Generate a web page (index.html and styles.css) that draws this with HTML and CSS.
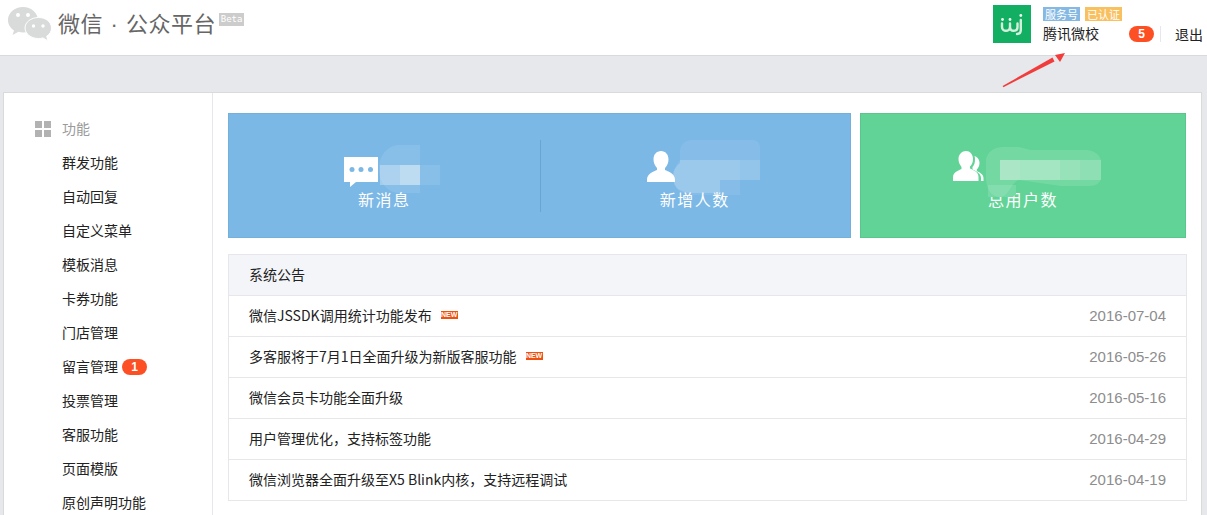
FILE: index.html
```html
<!DOCTYPE html>
<html lang="zh-CN">
<head>
<meta charset="utf-8">
<title>微信公众平台</title>
<link rel="stylesheet" href="styles.css">
</head>
<body>
<header class="topbar">
  <div class="brand">
    <svg class="brand-logo" width="46" height="36" viewBox="6 7 46 36">
      <path class="logo-back" d="M23 7C14.700 7 8 12.800 8 20c0 4.500 2.500 8 6 10.500L12.500 35l6-3.200c1.500.5 3 .7 4.500.7C31.300 32.500 38 26.700 38 20S31.300 7 23 7z"/>
      <circle class="logo-eye" cx="18" cy="15" r="2"/><circle class="logo-eye" cx="28" cy="15" r="2"/>
      <path class="logo-front" d="M38.500 17.500C31 17.500 25 22.200 25 28s6 10.500 13.500 10.500c1.500 0 3-.2 4.400-.6l5.100 3-1.300-4.600c3-2 4.800-5 4.800-8.300C51.500 22.200 46 17.500 38.500 17.500z"/>
      <circle class="logo-eye" cx="33.500" cy="26" r="1.700"/><circle class="logo-eye" cx="43" cy="26" r="1.700"/>
    </svg>
    <h1 class="brand-title">微信 · 公众平台</h1>
    <span class="beta">Beta</span>
  </div>
  <div class="account">
    <div class="avatar">
      <svg width="38" height="38" viewBox="0 0 38 38">
        <path class="avatar-stroke" d="M9 18.500v3.500c0 5 8 5 8 0v-3.500M17 22c0 5 7.500 5 7.500 0v-3.500M27.800 15v10c0 2.500-1.500 4-3.800 4"/>
        <circle class="avatar-dot" cx="9.500" cy="14.500" r="1.400"/><circle class="avatar-dot" cx="17" cy="14.500" r="1.400"/><circle class="avatar-dot" cx="27.800" cy="10.500" r="1.400"/>
      </svg>
    </div>
    <div class="account-info">
      <div class="account-tags"><span class="tag tag-blue">服务号</span><span class="tag tag-yellow">已认证</span></div>
      <div class="account-name">腾讯微校</div>
    </div>
    <span class="badge badge-top">5</span>
    <span class="logout">退出</span>
  </div>
</header>

<div class="page">
  <div class="shell">
    <nav class="sidebar">
      <div class="nav-head">
        <span class="nav-icon"><i></i><i></i><i></i><i></i></span>
        <span>功能</span>
      </div>
      <a class="nav-item">群发功能</a>
      <a class="nav-item">自动回复</a>
      <a class="nav-item">自定义菜单</a>
      <a class="nav-item">模板消息</a>
      <a class="nav-item">卡券功能</a>
      <a class="nav-item">门店管理</a>
      <a class="nav-item">留言管理<span class="badge badge-nav">1</span></a>
      <a class="nav-item">投票管理</a>
      <a class="nav-item">客服功能</a>
      <a class="nav-item">页面模版</a>
      <a class="nav-item">原创声明功能</a>
    </nav>
    <main class="content">
      <section class="stats">
        <div class="card card-blue">
          <div class="stat">
            <div class="stat-figure stat-figure-msg">
              <svg width="34" height="30" viewBox="0 0 34 30">
                <path class="icon-fill" d="M0 0h34v25H12l-6 5v-5H0z"/>
                <circle class="icon-dot" cx="8" cy="12.500" r="2.500"/><circle class="icon-dot" cx="17" cy="12.500" r="2.500"/><circle class="icon-dot" cx="26.500" cy="12.500" r="2.500"/>
              </svg>
            </div>
            <div class="stat-label">新消息</div>
            <svg class="blur blur-a" width="64" height="50" viewBox="0 0 64 50">
              <path fill="#fff" opacity=".1" d="M1 24C1 10 10 0 22 0h20v20h20v20H42v8H22C10 48 1 38 1 24z"/>
              <rect x="2" y="20" width="20" height="20" fill="#fff" opacity=".3"/>
              <rect x="22" y="20" width="20" height="20" fill="#fff" opacity=".45"/>
            </svg>
          </div>
          <div class="stat stat-split">
            <div class="stat-figure stat-figure-user">
              <svg width="28" height="32" viewBox="0 -1 28 32">
                <path class="icon-fill" d="M14 0c4.500 0 7.500 3.500 7.500 8.500 0 3.500-1.500 6.500-3.500 8.500v2c3 1.500 10 3.500 10 9.500V31H0v-2.500c0-6 7-8 10-9.500v-2c-2-2-3.500-5-3.500-8.500C6.500 3.500 9.500 0 14 0z"/>
              </svg>
            </div>
            <div class="stat-label">新增人数</div>
            <svg class="blur blur-b" width="88" height="56" viewBox="0 0 88 56">
              <path fill="#fff" opacity=".08" d="M8 20v-8C8 4 14 0 20 0h60c5 0 8 3 8 8v32H68v15H20C9 55 1 48 1 37c0-7 3-12 7-17z"/>
              <rect x="8" y="20" width="60" height="20" fill="#fff" opacity=".18"/>
              <rect x="68" y="20" width="20" height="20" fill="#fff" opacity=".12"/>
              <path fill="#fff" opacity=".18" d="M8 23C3 27 1 32 1 37c0 11 8 16 19 16h28V40H8z"/>
            </svg>
          </div>
        </div>
        <div class="card card-green">
          <div class="stat">
            <div class="stat-figure stat-figure-group">
              <svg width="34" height="32" viewBox="0 0 34 32">
                <path class="icon-fill" d="M13 1c4 0 7 3.500 7 8 0 3-1 5.500-3 7.500v2c3 1.500 8.500 3 8.500 8.500V31H0v-3.500c0-5.500 5.500-7 8.500-8.500v-2C6.500 14.500 5.500 12 5.500 9c0-4.500 3.500-8 7.500-8z"/>
                <path class="icon-fill" d="M21 6c3 .5 5.500 3 5.500 7 0 3-1.200 5-2.700 6.500V21c2 1 6.700 3 6.700 7v3h-2.500v-3c0-4-4-6.500-8.500-8.500V17c2-2 2.500-5 2.500-8 0-1-.2-2-.5-3z"/>
              </svg>
            </div>
            <div class="stat-label">总用户数</div>
            <svg class="blur blur-c" width="116" height="52" viewBox="0 0 116 52">
              <path fill="#74d9a4" d="M3 38h28v9l-3 3H3z"/>
              <path fill="#fff" opacity=".12" d="M1 12C3 4 10 0 18 0h16l12 3h55c8 0 15 5 15 12v15c0 6-5 9-12 9H76l-42-6C26 35 24 50 15 50 5 50 1 40 1 30z"/>
              <rect x="15" y="13" width="20" height="20" fill="#fff" opacity=".4"/>
              <rect x="35" y="13" width="40" height="20" fill="#fff" opacity=".35"/>
              <rect x="75" y="13" width="20" height="20" fill="#fff" opacity=".25"/>
              <rect x="95" y="13" width="21" height="20" fill="#fff" opacity=".2"/>
            </svg>
          </div>
        </div>
      </section>
      <section class="notice">
        <div class="notice-head">系统公告</div>
        <div class="notice-row"><span class="notice-text">微信JSSDK调用统计功能发布<span class="new">NEW</span></span><span class="notice-date">2016-07-04</span></div>
        <div class="notice-row"><span class="notice-text">多客服将于7月1日全面升级为新版客服功能<span class="new">NEW</span></span><span class="notice-date">2016-05-26</span></div>
        <div class="notice-row"><span class="notice-text">微信会员卡功能全面升级</span><span class="notice-date">2016-05-16</span></div>
        <div class="notice-row"><span class="notice-text">用户管理优化，支持标签功能</span><span class="notice-date">2016-04-29</span></div>
        <div class="notice-row"><span class="notice-text">微信浏览器全面升级至X5 Blink内核，支持远程调试</span><span class="notice-date">2016-04-19</span></div>
      </section>
    </main>
  </div>
</div>

<svg class="arrow" width="70" height="44" viewBox="0 0 70 44">
  <path d="M2.600 39 L52.500 10.500 L54.500 14.500 L3.400 40.200z" fill="#f23c3c"/>
  <path d="M65 6 L55 8 L60 15z" fill="#f23c3c"/>
</svg>
</body>
</html>
```

FILE: styles.css
```css
* { box-sizing: border-box; }

html, body {
  margin: 0;
  height: 515px;
  overflow: hidden;
}

body {
  position: relative;
  background: #e7e8eb;
  color: #222;
  font-family: "Noto Sans CJK SC", "Liberation Sans", sans-serif;
  font-size: 14px;
}

.topbar {
  height: 56px;
  background: #fff;
  border-bottom: 1px solid #d9dadc;
  display: flex;
  justify-content: space-between;
}

.brand {
  display: flex;
  align-items: flex-start;
  padding: 7px 0 0 6px;
}

.brand-logo { flex: none; }
.logo-back { fill: #d8dbd9; }
.logo-front { fill: #d8dbd9; stroke: #fff; stroke-width: 1; }
.logo-eye { fill: #fff; }

.brand-title {
  margin: 0 0 0 6px;
  font-family: "Liberation Sans", "Noto Sans CJK SC", sans-serif;
  font-size: 22px;
  font-weight: 400;
  line-height: 36px;
  letter-spacing: .5px;
  word-spacing: 1px;
  color: #666;
  white-space: nowrap;
}

.beta {
  margin: 6px 0 0 3px;
  width: 25px;
  height: 13px;
  background: #ccc;
  color: #fff;
  font-family: "DejaVu Sans Mono", monospace;
  font-size: 9px;
  line-height: 13px;
  text-align: center;
}

.account {
  display: flex;
  align-items: flex-start;
  padding: 5px 4px 0 0;
}

.avatar {
  width: 38px;
  height: 38px;
  background: #12ae62;
}

.avatar svg { display: block; }

.avatar-stroke {
  fill: none;
  stroke: #d4f0dc;
  stroke-width: 2.400;
  stroke-linecap: round;
}

.avatar-dot { fill: #f2fbf4; }

.account-info { margin-left: 12px; width: 86px; }

.account-tags {
  display: flex;
  gap: 5px;
  margin-top: 2px;
}

.tag {
  height: 14px;
  padding: 0 2px;
  color: #fff;
  font-size: 11px;
  line-height: 14px;
  white-space: nowrap;
}

.tag-blue { background: #85b9e3; }
.tag-yellow { background: #f9c05f; }

.account-name {
  margin-top: 2px;
  font-size: 14px;
  line-height: 20px;
  color: #222;
}

.badge {
  background: #fd4f24;
  color: #fff;
  border-radius: 8px;
  width: 25px;
  height: 16px;
  font-size: 12px;
  font-weight: 700;
  line-height: 16px;
  text-align: center;
  font-family: "Liberation Sans", sans-serif;
}

.badge-top { margin-top: 21px; }

.logout {
  margin: 21px 0 0 6px;
  padding-left: 14px;
  height: 16px;
  border-left: 1px solid #e7e7eb;
  font-size: 14px;
  line-height: 16px;
}

.page {
  padding: 36px 5px 0 3px;
}

.shell {
  display: flex;
  background: #fff;
  border: 1px solid #d9dadc;
  border-bottom: 0;
  height: 423px;
  overflow: hidden;
}

.sidebar {
  width: 209px;
  flex: none;
  border-right: 1px solid #e7e7eb;
  padding-top: 19px;
}

.nav-head, .nav-item {
  display: flex;
  align-items: center;
  height: 34px;
  padding-bottom: 2px;
  white-space: nowrap;
}

.nav-item { padding-left: 58px; color: #222; }

.nav-head {
  padding-left: 31px;
  color: #9a9a9a;
  gap: 11px;
}

.nav-icon {
  display: grid;
  grid-template-columns: 7px 7px;
  grid-template-rows: 7px 7px;
  gap: 2px;
  width: 16px;
  height: 16px;
  margin-top: 2px;
}

.nav-icon i { background: #b2b2b2; }

.badge-nav { margin-left: 4px; margin-top: 2px; }

.content {
  flex: 1;
  padding: 20px 15px 0 15px;
  min-width: 0;
}

.stats {
  display: flex;
  gap: 9px;
}

.card {
  height: 125px;
  display: flex;
  border: 1px solid;
}

.card-blue {
  width: 623px;
  background: #7bb8e6;
  border-color: #73b0dc;
}

.card-green {
  width: 326px;
  background: #61d396;
  border-color: #59c78c;
}

.stat {
  position: relative;
  flex: 1;
  display: flex;
  flex-direction: column;
  align-items: center;
}

.stat-split::before {
  content: "";
  position: absolute;
  left: 0;
  top: 26px;
  height: 72px;
  border-left: 1px solid #6aa4cf;
}

.stat-figure {
  display: flex;
  height: 44px;
  align-items: flex-end;
  width: 100%;
}

.stat-figure svg { display: block; flex: none; }
.stat-figure-msg { padding-left: 115px; height: 73px; }
.stat-figure-user { padding-left: 107px; height: 68px; }
.stat-figure-group { padding-left: 92px; height: 68px; }

.icon-fill { fill: #fff; }
.icon-dot { fill: #7bb8e6; }

.stat-label {
  height: 24px;
  color: #fff;
  font-size: 16px;
  line-height: 24px;
  letter-spacing: 1.500px;
  white-space: nowrap;
}

.stat-figure-user + .stat-label, .stat-figure-group + .stat-label { margin-top: 5px; }

.blur { position: absolute; display: block; }
.blur-a { left: 149px; top: 31px; }
.blur-b { left: 132px; top: 26px; }
.blur-c { left: 124px; top: 33px; }

.notice {
  margin-top: 16px;
  width: 959px;
  border: 1px solid #e7e7eb;
  border-bottom: 0;
}

.notice-head {
  height: 41px;
  padding-left: 20px;
  background: #f4f5f9;
  border-bottom: 1px solid #e7e7eb;
  line-height: 38px;
  color: #222;
}

.notice-row {
  height: 41px;
  padding: 0 20px 2px;
  display: flex;
  justify-content: space-between;
  align-items: center;
  border-bottom: 1px solid #e7e7eb;
}

.notice-text {
  display: flex;
  align-items: center;
  color: #222;
}

.new {
  margin-left: 9px;
  width: 17px;
  height: 8px;
  overflow: hidden;
  background: #f0500f;
  color: #fff;
  font-family: "Liberation Sans", sans-serif;
  font-size: 7px;
  font-weight: 700;
  line-height: 8px;
  text-align: center;
}

.notice-date {
  color: #8d8d8d;
  font-size: 15px;
  font-family: "Liberation Sans", sans-serif;
}

.arrow {
  position: absolute;
  left: 1000px;
  top: 47px;
}
```
